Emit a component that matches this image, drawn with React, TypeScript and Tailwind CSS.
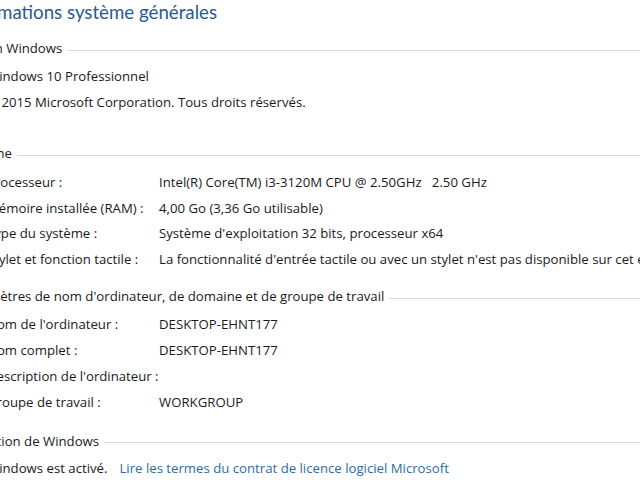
import React from "react";

const font = { fontFamily: '"Segoe UI", "Open Sans", "Noto Sans", sans-serif' };

function Heading({ text, className = "" }: { text: string; className?: string }) {
  return (
    <div className={`flex items-center h-[26px] ${className}`}>
      <span className="whitespace-nowrap text-[#1a1a1a]">{text}</span>
      <div className="flex-1 ml-[5px] mt-[2px] border-t border-[#d5dbdf]" />
    </div>
  );
}

function Row({ label, value, h = "h-[25.5px]", className = "" }: { label: string; value?: React.ReactNode; h?: string; className?: string }) {
  return (
    <div className={`flex items-center ${h} pl-[27px] whitespace-nowrap text-[#1a1a1a] ${className}`}>
      <div className="w-[172px] shrink-0">{label}</div>
      <div className="shrink-0">{value}</div>
    </div>
  );
}

export default function App() {
  return (
    <div className="w-[640px] h-[480px] overflow-hidden bg-white relative" style={font}>
      <div className="ml-[-40px] w-[700px] text-[13.2px] leading-none">
        <div className="h-[24px] flex items-center ml-[-2px] text-[18.7px] text-[#2a5a8e] whitespace-nowrap" style={{ fontFamily: '"Segoe UI", "Lato", sans-serif' }}>
          Informations système générales
        </div>
        <Heading text="Édition Windows" className="mt-[12px]" />
        <div className="flex items-center h-[26px] mt-[2px] pl-[27px] whitespace-nowrap text-[#1a1a1a]">Windows 10 Professionnel</div>
        <div className="flex items-center h-[26px] pl-[27px] whitespace-nowrap text-[#1a1a1a]">© 2015 Microsoft Corporation. Tous droits réservés.</div>
        <Heading text="Système" className="mt-[25px]" />
        <Row label="Processeur :" value={<span>Intel(R) Core(TM) i3-3120M CPU @ 2.50GHz&nbsp;&nbsp; 2.50 GHz</span>} className="mt-[3px]" />
        <Row label="Mémoire installée (RAM) :" value="4,00 Go (3,36 Go utilisable)" />
        <Row label="Type du système :" value="Système d'exploitation 32 bits, processeur x64" />
        <Row label="Stylet et fonction tactile :" value="La fonctionnalité d'entrée tactile ou avec un stylet n'est pas disponible sur cet écran." />
        <Heading text="Paramètres de nom d'ordinateur, de domaine et de groupe de travail" className="mt-[12px]" />
        <Row label="Nom de l'ordinateur :" value="DESKTOP-EHNT177" h="h-[26.3px]" className="mt-[1px]" />
        <Row label="Nom complet :" value="DESKTOP-EHNT177" h="h-[26.3px]" />
        <Row label="Description de l'ordinateur :" value="" h="h-[26.3px]" />
        <Row label="Groupe de travail :" value="WORKGROUP" h="h-[26.3px]" />
        <Heading text="Activation de Windows" className="mt-[12px]" />
        <div className="flex items-center h-[26px] mt-[1px] pl-[27px] whitespace-nowrap text-[#1a1a1a]">
          <span>Windows est activé.</span>
          <span className="ml-[12px] text-[#2a6ea8]">Lire les termes du contrat de licence logiciel Microsoft</span>
        </div>
      </div>
    </div>
  );
}
